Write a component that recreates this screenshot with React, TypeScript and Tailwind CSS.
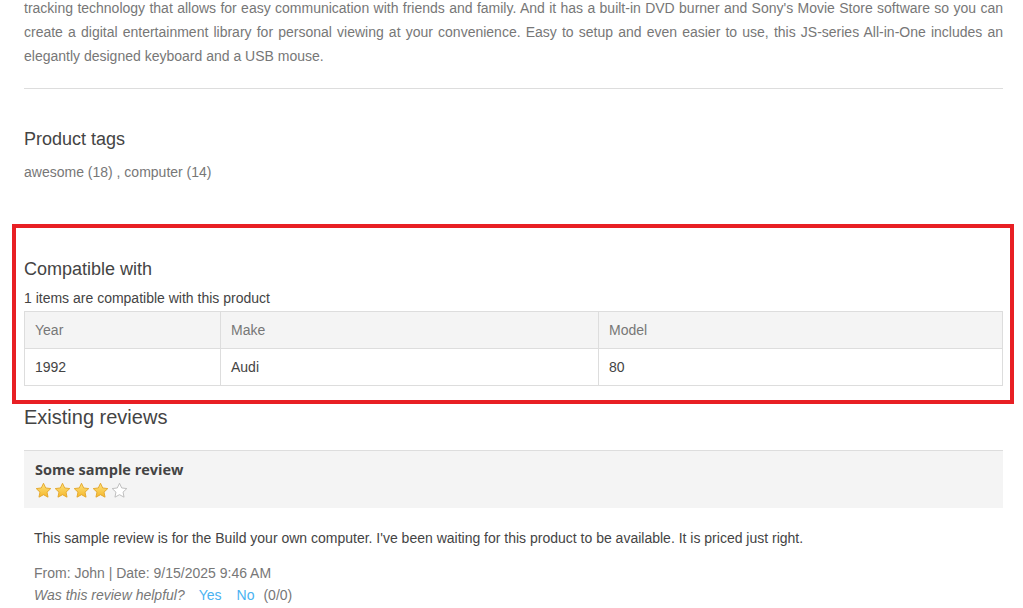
import React from 'react';

const Star = ({ filled }: { filled: boolean }) => (
  <svg width="17" height="17" viewBox="0 0 24 24" className="shrink-0">
    <defs>
      <linearGradient id="starGold" x1="0" y1="0" x2="0" y2="1">
        <stop offset="0%" stopColor="#fde27a" />
        <stop offset="100%" stopColor="#f5b82e" />
      </linearGradient>
    </defs>
    <path
      d="M12 1.8l3.1 6.6 7.2.9-5.3 5 1.4 7.1L12 17.9l-6.4 3.5 1.4-7.1-5.3-5 7.2-.9z"
      fill={filled ? 'url(#starGold)' : '#ffffff'}
      stroke={filled ? '#e3a62a' : '#b9b9b9'}
      strokeWidth="1.3"
      strokeLinejoin="round"
    />
  </svg>
);

const rows = [{ year: '1992', make: 'Audi', model: '80' }];

export default function App() {
  return (
    <div className="relative min-h-[608px] bg-white pt-px font-['Liberation_Sans',Arial,sans-serif] text-[#444]">
      <div className="px-[24px] pr-[20px]">
        {/* description */}
        <div className="-mt-[5px] text-[14px] leading-[24px] text-[#777] text-justify">
          <div className="[text-align-last:justify]">
            tracking technology that allows for easy communication with friends and family. And it has a built-in DVD burner and Sony's Movie Store software so you can
          </div>
          <div className="[text-align-last:justify]">
            create a digital entertainment library for personal viewing at your convenience. Easy to setup and even easier to use, this JS-series All-in-One includes an
          </div>
          <div>elegantly designed keyboard and a USB mouse.</div>
        </div>
        <div className="mt-[20px] h-px bg-[#ddd]" />

        {/* tags */}
        <h2 className="mt-[38px] text-[18px] leading-[24px] text-[#444]">Product tags</h2>
        <div className="mt-[11px] text-[14px] leading-[20px] text-[#777]">awesome (18) , computer (14)</div>

        {/* compatible */}
        <h2 className="mt-[75px] text-[18px] leading-[24px] text-[#444]">Compatible with</h2>
        <div className="mt-[8px] text-[14px] leading-[18px] text-[#444]">1 items are compatible with this product</div>
        <table className="mt-[4px] w-full border-collapse text-[14px]">
          <thead>
            <tr className="bg-[#f4f4f4]">
              <th className="h-[37px] w-[196px] border border-[#ddd] px-[10px] text-left font-normal text-[#777]">Year</th>
              <th className="h-[37px] w-[378px] border border-[#ddd] px-[10px] text-left font-normal text-[#777]">Make</th>
              <th className="h-[37px] border border-[#ddd] px-[10px] text-left font-normal text-[#777]">Model</th>
            </tr>
          </thead>
          <tbody>
            {rows.map((r) => (
              <tr key={r.year}>
                <td className="h-[37px] border border-[#ddd] px-[10px] text-[#444]">{r.year}</td>
                <td className="h-[37px] border border-[#ddd] px-[10px] text-[#444]">{r.make}</td>
                <td className="h-[37px] border border-[#ddd] px-[10px] text-[#444]">{r.model}</td>
              </tr>
            ))}
          </tbody>
        </table>

        {/* reviews */}
        <h2 className="mt-[19px] text-[20px] leading-[24px] text-[#444]">Existing reviews</h2>
        <div className="mt-[21px] border-t border-[#ddd] bg-[#f4f4f4] px-[11px] pt-[9px] pb-[9px]">
          <div className="font-['Open_Sans',sans-serif] text-[14.5px] font-bold leading-[20px] text-[#444]">Some sample review</div>
          <div className="mt-[2px] flex gap-[2px]">
            {[0, 1, 2, 3, 4].map((i) => (
              <Star key={i} filled={i < 4} />
            ))}
          </div>
        </div>
        <div className="mt-[21px] px-[10px] text-[14px] leading-[18px] text-[#444]">
          This sample review is for the Build your own computer. I've been waiting for this product to be available. It is priced just right.
        </div>
        <div className="mt-[16px] px-[10px] text-[14px] leading-[20px] text-[#777]">
          <div>From: John | Date: 9/15/2025 9:46 AM</div>
          <div className="mt-[2px] flex gap-[5px]">
            <span className="italic">Was this review helpful?</span>
            <span className="ml-[9px] text-[#4ab2f1]">Yes</span>
            <span className="ml-[10px] text-[#4ab2f1]">No</span>
            <span className="ml-[4px]">(0/0)</span>
          </div>
        </div>
      </div>

      {/* highlight annotation */}
      <div className="pointer-events-none absolute left-[12px] top-[224px] h-[180px] w-[1002px] border-[4px] border-[#e81f24]" />
    </div>
  );
}
